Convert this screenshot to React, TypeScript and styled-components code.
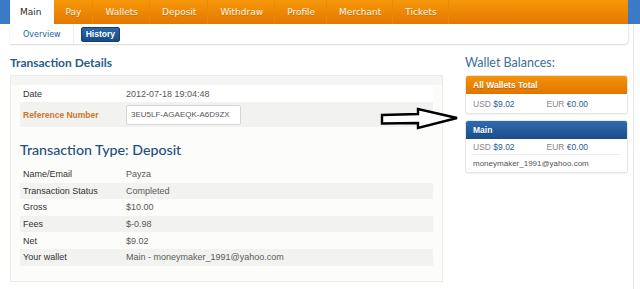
import React from 'react';
import styled, { createGlobalStyle } from 'styled-components';

const Global = createGlobalStyle`
  html, body { margin: 0; padding: 0; background: #fff; }
  body { font-family: "Liberation Sans", Arial, sans-serif; }
  * { box-sizing: border-box; }
`;

const Page = styled.div`
  position: relative;
  width: 640px;
  height: 289px;
  overflow: hidden;
  background: #fff;
`;

const Header = styled.div`
  display: flex;
  height: 24px;
  background: #3a7ac6;
  padding: 0 12px 0 10px;
`;

const Nav = styled.nav`
  flex: 1;
  display: flex;
  background: linear-gradient(#f69708, #e47800);
`;

const Tab = styled.div<{ $active?: boolean }>`
  display: flex;
  align-items: center;
  height: 24px;
  padding: 0 11px 0 ${p => (p.$active ? 10 : 12)}px;
  font-family: "DejaVu Sans", Verdana, sans-serif;
  font-size: 9px;
  color: ${p => (p.$active ? '#2a2a2a' : '#fff8ee')};
  background: ${p => (p.$active ? '#fff' : 'transparent')};
  border-right: 1px solid ${p => (p.$active ? '#fff' : '#e8890c')};
  text-shadow: ${p => (p.$active ? 'none' : '0 1px 0 rgba(160, 80, 0, 0.45)')};
`;

const Body = styled.div`
  margin-right: 6px;
  border-right: 1px solid #e9e9e6;
  height: 265px;
`;

const SubNav = styled.div`
  display: flex;
  align-items: center;
  height: 20px;
  margin: 0 5px 0 10px;
  background: #fff;
  border-bottom-right-radius: 4px;
  box-shadow: 0 1px 2px rgba(0, 0, 0, 0.13), 1px 0 2px rgba(0, 0, 0, 0.08);
`;

const SubLink = styled.div`
  font-family: "DejaVu Sans", Verdana, sans-serif;
  font-size: 8px;
  color: #2462a0;
  padding: 0 12px 0 13px;
  height: 20px;
  display: flex;
  align-items: center;
  border-right: 1px solid #eeeeea;
`;

const SubButton = styled.div`
  margin-left: 7px;
  height: 15px;
  padding: 0 4px;
  display: flex;
  align-items: center;
  border-radius: 2px;
  background: linear-gradient(#2c66a9, #174a86);
  border: 1px solid #133f72;
  color: #fff;
  font-family: "Liberation Sans", Arial, sans-serif;
  font-weight: bold;
  font-size: 8.5px;
`;

const Columns = styled.div`
  display: flex;
  padding-left: 10px;
  gap: 22px;
`;

const LeftCol = styled.div`
  width: 433px;
`;

const RightCol = styled.div`
  width: 163px;
`;

const SectionTitle = styled.h2`
  margin: 11px 0 4px;
  font-family: Lato, "Open Sans", sans-serif;
  font-weight: bold;
  font-size: 12px;
  line-height: 16px;
  color: #2a5b8b;
`;

const SideTitle = styled.h3`
  margin: 11px 0 4px;
  font-family: Lato, "Open Sans", sans-serif;
  font-weight: normal;
  font-size: 12.5px;
  line-height: 16px;
  color: #3e6e9c;
`;

const Panel = styled.div`
  height: 207px;
  border: 1px solid #ebebe5;
  background: linear-gradient(#f5f5f3 0, #f5f5f3 9px, #fcfcfb 9px);
  padding: 9px 9px 0 9px;
`;

const Row = styled.div<{ $shade?: string; $h?: number }>`
  display: flex;
  align-items: center;
  height: ${p => p.$h ?? 16.6}px;
  background: ${p => p.$shade ?? 'transparent'};
  font-size: 9px;
`;

const Label = styled.div<{ $accent?: boolean }>`
  width: 106px;
  padding-left: 3px;
  color: ${p => (p.$accent ? '#c9782b' : '#333')};
  font-weight: ${p => (p.$accent ? 'bold' : 'normal')};
  font-size: ${p => (p.$accent ? '8.5px' : '9px')};
`;

const Value = styled.div`
  color: #5a5a5a;
`;

const RefBox = styled.div`
  width: 115px;
  height: 20px;
  padding: 0 4px;
  display: flex;
  align-items: center;
  border: 1px solid #d6d6d2;
  background: #fff;
  border-radius: 2px;
  color: #555;
  font-size: 8px;
`;

const TypeTitle = styled.h2`
  margin: 13px 0 6px;
  font-family: Lato, "Open Sans", sans-serif;
  font-weight: 500;
  font-size: 14.2px;
  line-height: 20px;
  color: #1e4f80;
`;

const Card = styled.div`
  margin-bottom: 6px;
  border: 1px solid #e6e6e2;
  border-radius: 3px;
  background: #fff;
  box-shadow: 0 1px 1px rgba(0, 0, 0, 0.05);
  overflow: hidden;
`;

const CardHead = styled.div<{ $tone: 'orange' | 'blue' }>`
  height: 18px;
  display: flex;
  align-items: center;
  padding-left: 7px;
  color: #fff;
  font-family: "Liberation Sans", Arial, sans-serif;
  font-weight: bold;
  font-size: 8.5px;
  text-shadow: 0 1px 0 rgba(0, 0, 0, 0.25);
  background: ${p =>
    p.$tone === 'orange'
      ? 'linear-gradient(#f49306, #e27400)'
      : 'linear-gradient(#2f6cae, #1a4d89)'};
`;

const CardRow = styled.div<{ $h?: number; $line?: boolean }>`
  display: flex;
  align-items: center;
  height: ${p => p.$h ?? 18}px;
  margin: 0 7px;
  font-size: 8.5px;
  border-bottom: ${p => (p.$line ? '1px solid #ececea' : 'none')};
`;

const Money = styled.div`
  width: 74px;
  color: #888;
  b {
    font-weight: normal;
    color: #2b5d90;
  }
`;

const Email = styled.div`
  color: #555;
  font-size: 8px;
`;

const ArrowSvg = styled.svg`
  position: absolute;
  left: 378px;
  top: 105px;
`;

const tabs = ['Main', 'Pay', 'Wallets', 'Deposit', 'Withdraw', 'Profile', 'Merchant', 'Tickets'];

const typeRows: [string, string][] = [
  ['Name/Email', 'Payza'],
  ['Transaction Status', 'Completed'],
  ['Gross', '$10.00'],
  ['Fees', '$-0.98'],
  ['Net', '$9.02'],
  ['Your wallet', 'Main - moneymaker_1991@yahoo.com'],
];

export default function App() {
  return (
    <Page>
      <Global />
      <Header>
        <Nav>
          {tabs.map((t, i) => (
            <Tab key={t} $active={i === 0}>{t}</Tab>
          ))}
        </Nav>
      </Header>
      <Body>
        <SubNav>
          <SubLink>Overview</SubLink>
          <SubButton>History</SubButton>
        </SubNav>
        <Columns>
          <LeftCol>
            <SectionTitle>Transaction Details</SectionTitle>
            <Panel>
              <Row $shade="#fff" $h={17}>
                <Label>Date</Label>
                <Value>2012-07-18 19:04:48</Value>
              </Row>
              <Row $shade="#f2f2f1" $h={25}>
                <Label $accent>Reference Number</Label>
                <RefBox>3EU5LF-AGAEQK-A6D9ZX</RefBox>
              </Row>
              <TypeTitle>Transaction Type: Deposit</TypeTitle>
              {typeRows.map(([l, v], i) => (
                <Row key={l} $shade={i % 2 === 1 ? '#f2f2f1' : undefined}>
                  <Label>{l}</Label>
                  <Value>{v}</Value>
                </Row>
              ))}
            </Panel>
          </LeftCol>
          <RightCol>
            <SideTitle>Wallet Balances:</SideTitle>
            <Card>
              <CardHead $tone="orange">All Wallets Total</CardHead>
              <CardRow $h={19}>
                <Money>USD <b>$9.02</b></Money>
                <Money>EUR <b>€0.00</b></Money>
              </CardRow>
            </Card>
            <Card>
              <CardHead $tone="blue">Main</CardHead>
              <CardRow $h={16} $line>
                <Money>USD <b>$9.02</b></Money>
                <Money>EUR <b>€0.00</b></Money>
              </CardRow>
              <CardRow $h={17}>
                <Email>moneymaker_1991@yahoo.com</Email>
              </CardRow>
            </Card>
          </RightCol>
        </Columns>
      </Body>
      <ArrowSvg width="84" height="28" viewBox="0 0 84 28">
        <path
          d="M4 10 L40 9 L40 4 L79 13 L40 23 L40 18 L4 18.5 Z"
          fill="#fff"
          stroke="#000"
          strokeWidth="2.4"
          strokeLinejoin="miter"
        />
      </ArrowSvg>
    </Page>
  );
}
